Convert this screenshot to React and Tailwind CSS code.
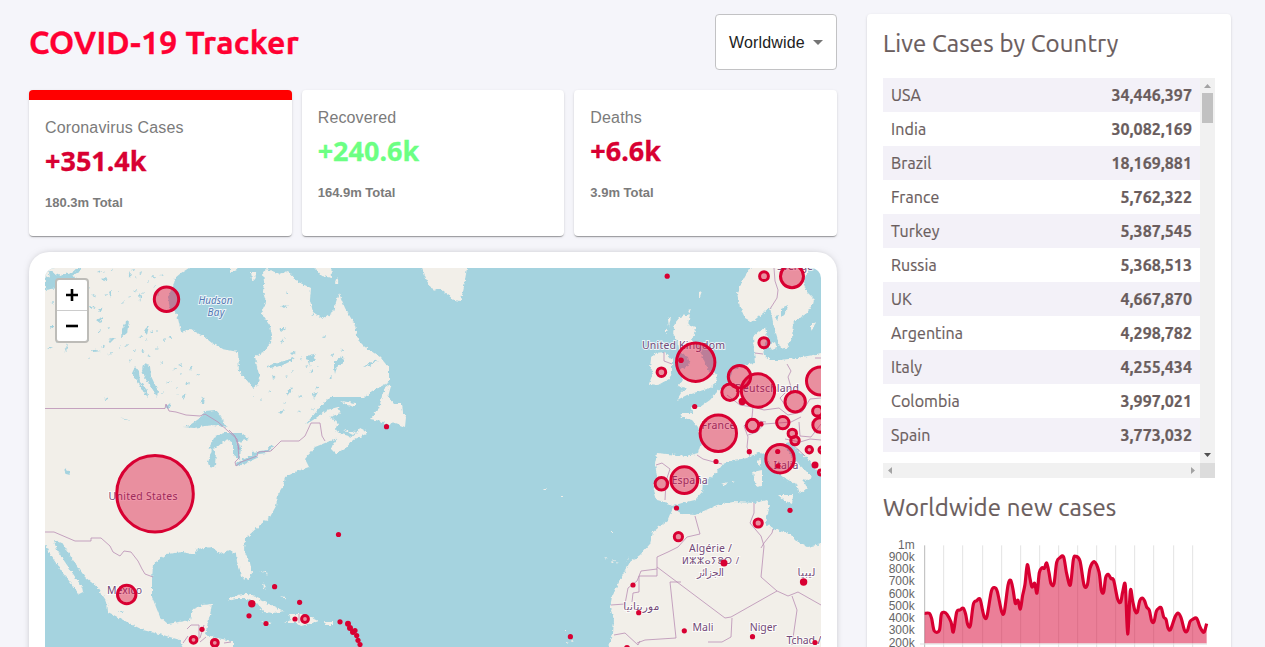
import React from "react";

const COUNTRIES = [
  ["USA", "34,446,397"],
  ["India", "30,082,169"],
  ["Brazil", "18,169,881"],
  ["France", "5,762,322"],
  ["Turkey", "5,387,545"],
  ["Russia", "5,368,513"],
  ["UK", "4,667,870"],
  ["Argentina", "4,298,782"],
  ["Italy", "4,255,434"],
  ["Colombia", "3,997,021"],
  ["Spain", "3,773,032"],
];

const LAND = [
  // North and Central America
  "M40 262H197L189 268L181 273L175 278L173 287L168 296L170 310L177 314L181 332L190 329L203 336L212 343L223 349L238 352L239 371L245 378L253 388L257 385L260 378L257 367L255 356L263 352L271 343L272 335L270 326L261 313L266 302L263 292L264 282L263 272L267 269L280 274L288 271L298 282L311 288L310 300L313 312L323 319L333 312L336 302L339 293L345 308L355 325L358 340L365 347L380 357L389 368L389 382L380 387L372 391L365 397H330L322 405L305 425L313 420L327 410L338 407L341 413L330 417L338 423L335 430L342 434L352 437L356 434L360 428L366 431L366 434L353 440L345 449L336 454L331 449L333 444L338 438L330 441L315 447L305 459L309 467L300 470L285 477L283 487L278 495L276 506L270 517L260 525L245 539L244 550L250 563L252 572L249 580L243 578L237 562L236 554L230 550L220 554L212 547L197 549L195 555L183 552L167 554L153 564L152 580L152 597L160 617L168 624L190 620L193 609L203 605L212 604L210 615L205 634L217 638L233 641V650H183L180 640L163 635L143 630L127 622L108 612L107 602L97 587L85 577L73 560L63 544L54 540L57 550L67 565L82 587L83 592L79 594L70 582L62 572L50 554L45 544H40Z",
  // Arctic islands and Greenland
  "M230 262H241L237 270L230 273Z M251 272L255 272L256 279L252 280Z M310 262H331L332 278L322 276Z M336 278L339 283L335 284Z M420 262H468L464 286L461 301L454 300L448 295L440 289L433 291L427 281Z",
  // Newfoundland and the Gulf islands
  "M386 385L391 386L388 397L394 404L402 404L403 412L406 417L405 427L400 425L392 422L389 426L381 421L370 419L379 409L382 396Z M340 401L355 403L355 407L347 405Z M343 430L356 432L353 435Z",
  // Caribbean
  "M228 601Q235 593 249 594Q262 600 271 605L284 611L273 613L264 612L256 603L247 599L236 599Z M289 614L301 614L310 617L318 621L309 624L301 626L297 623L284 623L291 620Z M262 621L272 623L268 625Z M324 622H333V625H325Z M263 582L266 587L264 590Z M230 597L233 598L230 600Z M259 571L267 572L268 576L266 573Z M280 596L285 597L287 600Z",
  // British Isles
  "M680 317L690 314L688 325L696 328L692 340L697 347L702 355L708 370L717 375L716 383L710 388L697 392L687 395L677 400L681 393L687 388L678 386L683 380L678 371L690 365L688 357L680 353L678 343L673 333L675 323Z M655 353L665 352L672 360L672 373L669 379L658 385L649 384L653 373L650 367L651 359Z M668 319L671 317L669 327Z M665 328L668 330L665 333Z M699 292L702 291L699 299Z M688 310L691 309L689 313Z",
  // Scandinavia
  "M765 262L750 268L742 282L737 293L740 307L745 318L752 322L763 313L770 307L773 323L780 347L787 348L792 338L793 323L807 313L815 300L807 292L803 282L812 262Z M811 325L816 322L811 332Z",
  // Continental Europe
  "M753 337L765 327L767 337L763 350L764 355L770 360L780 360L797 358L813 355L825 352V480L815 468L807 458L797 450L790 442L785 443L787 450L794 460L805 470L812 477L807 480L803 479L807 488L800 494L797 485L783 477L770 467L766 456L760 452L748 458L733 460L723 464L717 472L703 483L702 492L695 500L682 503L672 506L665 502L657 500L653 487L657 477L655 463L657 453L687 456L698 453L702 440L698 427L692 420L682 417L680 413L692 413L691 407L700 407L710 400L717 392L728 384L733 370L743 365L755 363L754 351Z M769 345L775 342L777 348L772 350Z M780 341L786 338L787 347L781 349Z",
  "M778 495L793 495L792 504L784 500Z M753 472L762 470L762 486L756 487Z M757 462L761 458L761 468Z M722 484L727 482L724 486Z M732 481L735 482L732 483Z",
  // Africa
  "M673 508L682 514L695 515L717 505L733 502L755 503L766 500L770 505L768 513L765 523L773 529L790 534L798 542L808 547L825 543V650H607L613 634L614 620L610 607L612 597L620 580L630 562L640 555L650 544L653 532L668 520Z",
  // Atlantic islands
  "M543 489L547 489L545 491Z M560 496H564V497H560Z M605 558L607 557L606 560Z M611 561L615 560L613 563Z M616 562L619 563L617 564Z M626 562L630 556L628 560Z M564 630H566V632Z M572 641L574 642H571Z M566 642L569 643H566Z M610 531H612V532H610Z",
];

const LAKES = [
  "M45 279L50 276L48 270L60 276L74 271L82 267L80 271L72 276L76 278L68 284L58 288L45 290Z",
  "M190 425L200 418L205 411L215 410L221 417L227 428L215 425L205 426L194 428L183 427Z",
  "M208 450L215 436L224 433L240 433L249 439L242 441L235 443L230 440L223 442L216 448Z",
  "M212 449L216 452L215 466L210 468L208 463Z M233 441L241 446L240 460L233 455Z",
  "M236 463L244 458L256 454L257 458L246 463L237 467Z M252 452L267 450L272 444L274 447L267 453L252 455Z",
  "M143 364L150 366L151 376L158 391L157 397L153 390L145 377L142 371Z",
  "M135 367L139 372L140 382L147 390L148 397L144 393L138 382L132 373Z",
  "M202 397L205 399L204 404L201 402Z M166 404L172 405L168 409L165 407Z",
  "M126 322L129 321L127 333L121 338L122 329Z M88 306L96 307L92 309Z M98 310L103 307L100 312Z",
  "M146 328L149 326L147 335L144 331Z M64 469L69 471L70 475L66 474Z M109 292L112 290L111 297Z",
  "M96 320L103 317L100 323Z M49 326L54 326L52 329Z M48 347L53 347L49 349Z M71 338L76 339L73 341Z",
  "M108 340L115 338L110 343Z M139 293L142 297L140 302Z M100 279L108 278L103 282Z M128 275L131 271L130 278Z",
  "M267 366L274 364L284 361L296 357L291 361L281 366L270 368Z M272 373L275 378L273 380Z M286 394L291 387L293 388L287 396Z",
  "M306 356L314 354L316 361L311 361L310 367Z M334 362L343 356L344 363L337 366L335 374L334 368Z M363 367L371 362L379 360L370 366Z",
  "M313 394L318 392L314 399Z M279 328L286 328L281 332Z M280 341L285 338L282 343Z M290 353L297 351L292 355Z",
  "M317 293L320 292L320 297Z M286 293L288 292L288 295Z M281 306L288 305L284 308Z M278 412L285 410L281 414Z",
  "M781 309L788 306L786 312L781 317Z M775 316L779 315L777 321Z M118 611L123 611L120 613Z M120 417L128 420L131 421L126 420Z",
  "M166 383L171 381L168 384Z M190 367L193 366L191 370Z M182 396L187 393L183 399Z M90 349L101 351L94 352Z M65 349L68 344L66 352Z",
];

const PONDS = [
  [103, 272], [110, 270], [131, 270], [134, 277], [139, 273], [97, 272], [147, 282], [153, 287], [151, 277], [117, 291],
  [104, 295], [92, 296], [88, 288], [55, 299], [50, 303], [122, 303], [128, 297], [133, 291], [142, 293], [98, 332],
  [62, 316], [82, 322], [107, 328], [85, 341], [79, 333], [102, 347], [108, 354], [119, 348], [125, 345], [132, 351],
  [88, 358], [141, 351], [147, 356], [156, 349], [163, 340], [168, 338], [56, 342], [129, 361],
  [173, 369], [180, 374], [160, 363], [178, 365], [176, 388], [186, 384], [196, 375], [161, 393],
  [176, 395], [104, 399], [156, 331], [150, 332], [139, 337], [145, 341], [160, 275], [155, 295], [71, 301],
  [311, 315], [322, 337], [300, 359], [305, 366], [309, 372], [317, 366], [329, 378], [340, 350],
  [292, 371], [285, 376], [298, 397], [312, 410], [316, 388], [268, 392], [260, 400],
  [283, 403], [297, 412], [252, 397], [331, 355],
];

const BORDERS = [
  "M45 408.500H165L166 404L169 411L176 412L186 415L200 416L205 414L218 422L228 431L237 439L239 450",
  "M229 430L235 436L239 449M271 451L258 452L257 456L241 462L236 466L235 462L239 458L238 447",
  "M271 451L281 441H299L305 436L311 423L315 423L320 423L322 436L325 441",
  "M45 532L54 532L75 541H91V538H101L110 546L113 552L120 556L124 551L131 552L138 561L142 569L145 574L153 577",
  "M187 629L191 625H199V639M204 625L200 638M183 643L188 636M200 642L206 637M224 643L231 642M299 614V623",
  "M774 268L775 281L778 290L777 298L770 309M664 352L664 361L672 364M755 353L763 354",
  "M787 364L791 371L788 377L791 387L780 398L785 405M815 358L821 358M727 395L740 405L753 407L752 417L744 426L748 437L747 447L750 456",
  "M753 407L764 410L779 408L788 415L802 412L810 399L821 398M748 435L757 432L764 424L778 423L791 422L801 417M744 426L751 420L766 422",
  "M697 455L703 459L714 462L722 464M656 465L662 463L670 469L666 481L665 500M799 422L800 436L811 437L821 424M785 439L800 442L810 439L821 440M791 443L805 456",
  "M695 516L698 527L700 534L687 537L678 547L668 552L657 557V576H639V592L633 593L632 602M657 569L641 571L637 581L628 588L625 604L611 605M657 567L725 618L731 617L777 591L761 577L764 546L761 536L750 523L754 513L754 503",
  "M761 548L764 543L772 533L773 529M777 591L788 596L798 592L821 605M792 596L797 610L792 645M732 618L731 637L722 642H708M681 582H670L676 638L645 640L637 643M614 635L625 633L638 645L640 641",
];

// x, y, radius of each case marker
const CASES = [
  [166.500, 299.300, 12.200], [155, 493.700, 38.300], [126.700, 594.500, 9.200], [695.700, 362.200, 19.200], [758, 390.500, 16.700],
  [739.500, 376.700, 11.200], [730, 392.200, 8.200], [792, 276.200, 11.500], [764, 276.200, 4.400], [763.900, 342.700, 5], [661.400, 372.200, 4.300],
  [820.500, 381, 14], [795.200, 401.700, 10.200], [718.300, 433.200, 18.200], [684.300, 480.200, 13.400], [661.400, 483.800, 6.300],
  [780, 458.700, 14.200], [752.500, 425.500, 6.200], [782.800, 422.600, 6.200], [792.300, 433.400, 4.200], [795, 440.600, 4.200],
  [809.300, 449.700, 3.200], [817.500, 411.200, 4.900], [820, 425, 7.200], [822, 450, 3], [821, 472.500, 2.500], [678.400, 536.700, 4.100],
  [758.200, 523, 4.100], [193.500, 639.800, 3.400], [214.800, 642.800, 3.400], [305, 619, 3.400],
];

const DOTS = [
  [386.500, 426.700, 2.600], [338.500, 534.500, 2.600], [274.600, 586.700, 2.600], [299.600, 602.300, 2.600],
  [251.800, 603.700, 3.700], [249, 615.800, 2.600], [266, 623.500, 2.600], [295, 619, 2.600], [340, 621.800, 2.600],
  [348, 623.800, 3], [350, 628, 3], [353, 632, 3], [355, 630.500, 2.600], [356.700, 635.500, 2.600], [358, 640.300, 2.600],
  [360, 644.500, 2.600], [202, 629.300, 2.600], [667.200, 276.200, 2.600], [681, 360.300, 2.800], [694.700, 406.500, 2.600],
  [742.300, 401.500, 3.700], [761, 424, 2.600], [749.300, 451.700, 2.600], [716, 461.500, 2.600], [777.700, 451.500, 2.600],
  [778, 466, 2.600], [815, 465, 3.500], [676.500, 508, 2.600], [790, 510.300, 2.600], [724, 563, 3.500], [803.600, 582, 3.700],
  [633, 585, 2.600], [638.700, 612.700, 2.600], [684.300, 630.800, 2.600], [752.500, 636.700, 2.600], [570.400, 636.700, 2.600],
  [815, 642.500, 2.600], [627, 648, 3],
];

const LABELS = [
  ["United States", 143, 500, 69], ["México", 124.500, 593.500, 35], ["United Kingdom", 683.500, 349, 83],
  ["Deutschland", 767, 391.500, 64], ["France", 718.500, 429, 34], ["España", 689.700, 484, 36], ["Italia", 786, 469, 25],
  ["Algérie /", 710.500, 552, 43], ["الجزائر", 710.500, 575.500, 27], ["ليبيا", 806.500, 575.500, 18],
  ["موريتانيا", 641.300, 610, 36], ["Mali", 703, 630.500, 21], ["Niger", 763.300, 630.500, 27],
  ["Tchad /", 804, 643.500, 35], ["Sverige", 795, 270, 36],
];

function WorldMap() {
  return (
    <svg viewBox="45 268 776 379" className="block h-[379px] w-[776px] shrink-0 rounded-t-[10px] bg-[#a5d3df]">
      <defs>
        <filter id="coast" filterUnits="userSpaceOnUse" x="30" y="255" width="810" height="400" colorInterpolationFilters="sRGB">
          <feTurbulence type="fractalNoise" baseFrequency="0.35" numOctaves="2" seed="4" result="noise" />
          <feDisplacementMap in="SourceGraphic" in2="noise" scale="4" xChannelSelector="R" yChannelSelector="G" />
        </filter>
      </defs>
      <g filter="url(#coast)">
        {LAND.map((d) => (
          <path key={d} d={d} fill="#f2efe9" />
        ))}
        {LAKES.map((d) => (
          <path key={d} d={d} fill="#a5d3df" />
        ))}
        {PONDS.map(([x, y], i) => (
          <path key={`${x}-${y}`} d={`M${x} ${y}l${2 + (i % 3)} ${-1 - (i % 2)}l-1 ${2 + (i % 2)}z`} fill="#a5d3df" />
        ))}
      </g>
      {BORDERS.map((d) => (
        <path key={d} d={d} fill="none" stroke="#b98fb4" strokeWidth="1" opacity="0.8" />
      ))}
      <g
        fontFamily='"Noto Sans", "DejaVu Sans", sans-serif'
        fontSize="10.500"
        textAnchor="middle"
        fill="#734a78"
        stroke="#ffffff"
        strokeOpacity="0.75"
        strokeWidth="2"
        paintOrder="stroke"
      >
        {LABELS.map(([text, x, y, width]) => (
          <text key={text} x={x} y={y} textLength={width} lengthAdjust="spacing">
            {text}
          </text>
        ))}
        <text x="710.500" y="563.500" fontSize="9" textLength="57">
          ⵍⵣⵣⴰⵢⴻⵔ /
        </text>
        <g fill="#5478b4" fontStyle="italic" fontSize="10">
          <text x="215.500" y="304" textLength="34">Hudson</text>
          <text x="216" y="316" textLength="17">Bay</text>
        </g>
      </g>
      <g fill="#dd0030" fillOpacity="0.400" stroke="#d80032" strokeWidth="3">
        {CASES.map(([x, y, r]) => (
          <circle key={`${x}-${y}`} cx={x} cy={y} r={r} />
        ))}
      </g>
      <g fill="#d80032">
        {DOTS.map(([x, y, r]) => (
          <circle key={`${x}-${y}`} cx={x} cy={y} r={r} />
        ))}
      </g>
    </svg>
  );
}

// Daily new cases as plotted points, three units to a pixel
const SERIES = [
  [194, 609], [208, 609], [215, 625], [223, 662], [238, 660], [244, 612], [253, 606], [261, 612], [273, 635], [280, 665],
  [290, 606], [300, 599], [310, 594], [317, 612], [323, 642], [331, 646], [340, 582], [350, 571], [360, 566], [367, 597],
  [373, 620], [381, 618], [394, 543], [404, 532], [412, 544], [425, 604], [433, 604], [444, 525], [452, 510], [459, 537],
  [466, 579], [474, 570], [481, 596], [488, 555], [495, 522], [502, 463], [510, 505], [516, 530], [524, 519], [531, 548],
  [538, 487], [546, 472], [553, 474], [560, 458], [567, 487], [573, 520], [582, 520], [590, 456], [600, 442], [611, 440],
  [620, 490], [631, 524], [640, 448], [647, 438], [660, 452], [672, 524], [682, 524], [690, 474], [703, 454], [717, 485],
  [724, 540], [731, 545], [737, 502], [745, 492], [753, 505], [761, 510], [773, 567], [782, 575], [788, 545], [796, 525],
  [803, 671], [811, 541], [818, 572], [825, 602], [832, 605], [839, 572], [847, 563], [854, 572], [860, 590], [868, 600],
  [875, 632], [882, 634], [889, 603], [896, 594], [904, 593], [911, 620], [918, 627], [924, 653], [932, 657], [945, 620],
  [954, 608], [963, 622], [974, 661], [982, 661], [990, 634], [998, 627], [1010, 624], [1020, 650], [1029, 665], [1034, 662],
  [1040, 640],
];

function smoothLine(points) {
  let d = `M${points[0][0]} ${points[0][1]}`;
  for (let i = 0; i < points.length - 1; i++) {
    const before = points[i - 1] || points[i];
    const from = points[i];
    const to = points[i + 1];
    const after = points[i + 2] || to;
    const k = 0.16;
    d += `C${from[0] + (to[0] - before[0]) * k} ${from[1] + (to[1] - before[1]) * k} ${to[0] - (after[0] - from[0]) * k} ${
      to[1] - (after[1] - from[1]) * k
    } ${to[0]} ${to[1]}`;
  }
  return d;
}

const TICKS = [
  ["1m", 404], ["900k", 440], ["800k", 476], ["700k", 512], ["600k", 551],
  ["500k", 587], ["400k", 623], ["300k", 659], ["200k", 697],
];

function CasesChart() {
  const line = smoothLine(SERIES);
  return (
    <svg viewBox="69 380 996 331" className="block h-[110.333px] w-[332px] shrink-0">
      {[251, 308, 368, 425, 482, 539, 596, 653, 710, 767, 824, 881, 941, 998].map((x) => (
        <path key={x} d={`M${x} 405V711`} stroke="#e3e3e3" strokeWidth="3" />
      ))}
      <path d="M194 405V711" stroke="#b9b9b9" strokeWidth="3" />
      <path d="M180 701H1041" stroke="#dddddd" strokeWidth="3" />
      <path d={`${line}V699H194Z`} fill="#d80032" fillOpacity="0.500" />
      <path d={line} fill="none" stroke="#d80032" strokeWidth="9.500" strokeLinejoin="round" />
      <g fontFamily='"Liberation Sans", Arial, sans-serif' fontSize="36" fill="#666666" textAnchor="end">
        {TICKS.map(([text, y]) => (
          <text key={text} x="164" y={y + 12}>
            {text}
          </text>
        ))}
      </g>
    </svg>
  );
}

function InfoBox({ title, cases, total, active, green }) {
  return (
    <div
      className={
        "h-[146px] flex-1 rounded bg-white px-4 pt-4 shadow-[0_2px_1px_-1px_rgba(0,0,0,0.2),0_1px_1px_rgba(0,0,0,0.14),0_1px_3px_rgba(0,0,0,0.12)] " +
        (active ? "border-t-[10px] border-[#ff0000]" : "")
      }
    >
      <p className="pt-px text-[16px] leading-[22px] tracking-[0.15px] text-[#7b7b7b]">{title}</p>
      <h2
        className={
          "mt-[5px] font-['Noto_Sans',sans-serif] text-[27px] leading-[34px] font-bold [-webkit-text-stroke:0.3px] " +
          (green ? "text-[#6cff83]" : "text-[#d80032]")
        }
      >
        {cases}
      </h2>
      <p className="mt-[15px] text-[13px] leading-[20px] font-bold text-[#7b7b7b]">{total}</p>
    </div>
  );
}

export default function App() {
  return (
    <div className="flex h-[647px] w-[1265px] items-start gap-[30px] overflow-hidden bg-[#f5f5fa] pt-[14px] pl-[29px] font-['Liberation_Sans',Arial,sans-serif]">
      <main className="w-[808px] shrink-0">
        <header className="flex h-[56px] items-center justify-between">
          <h1 className="font-['Ubuntu','Noto_Sans',sans-serif] text-[32px] leading-none font-bold tracking-[0.25px] whitespace-nowrap text-[#ff0032] [-webkit-text-stroke:0.3px]">
            COVID-19 Tracker
          </h1>
          <div className="flex h-[56px] w-[122px] items-center rounded border border-[#c2c2c4] bg-white pl-[13px] text-[16px] text-[#212121]">
            <span className="w-[77px] pt-px tracking-[0.15px]">Worldwide</span>
            <svg viewBox="0 0 10 5" className="ml-[7px] h-[5px] w-[10px]">
              <path d="M0 0H10L5 5Z" fill="#757575" />
            </svg>
          </div>
        </header>
        <section className="mt-[20px] flex gap-[10px]">
          <InfoBox title="Coronavirus Cases" cases="+351.4k" total="180.3m Total" active />
          <InfoBox title="Recovered" cases="+240.6k" total="164.9m Total" green />
          <InfoBox title="Deaths" cases="+6.6k" total="3.9m Total" />
        </section>
        <section className="relative mt-[16px] h-[500px] rounded-[20px] bg-white p-4 shadow-[0_0_8px_-4px_rgba(0,0,0,0.5)]">
          <WorldMap />
          <div className="absolute top-[26px] left-[26px] w-[34px] rounded border-2 border-[#bdbcb8] bg-white">
            <div className="flex h-[31px] items-center justify-center border-b border-[#cccccc]">
              <svg viewBox="0 0 12 12" className="h-3 w-3">
                <path d="M6 0V12M0 6H12" stroke="#000" strokeWidth="2.600" />
              </svg>
            </div>
            <div className="flex h-[30px] items-center justify-center">
              <svg viewBox="0 0 12 12" className="h-3 w-3">
                <path d="M0 6H12" stroke="#000" strokeWidth="2.600" />
              </svg>
            </div>
          </div>
        </section>
      </main>

      <aside className="h-[700px] w-[364px] shrink-0 rounded bg-white px-4 pt-4 font-['Ubuntu','Noto_Sans',sans-serif] text-[#6a5d5d] shadow-[0_2px_1px_-1px_rgba(0,0,0,0.2),0_1px_1px_rgba(0,0,0,0.14),0_1px_3px_rgba(0,0,0,0.12)]">
        <h3 className="h-[28px] text-[24px] leading-[28px] tracking-[0.12px] whitespace-nowrap [-webkit-text-stroke:0.2px]">
          Live Cases by Country
        </h3>
        <div className="mt-[20px] h-[400px]">
          <div className="flex h-[385px]">
            <div className="w-[317px] overflow-hidden">
              {COUNTRIES.map(([name, count], i) => (
                <div
                  key={name}
                  className={
                    "flex h-[34px] items-center justify-between px-2 text-[16px] " + (i % 2 === 0 ? "bg-[#f3f1f8]" : "bg-white")
                  }
                >
                  <span className="tracking-[0.1px] [-webkit-text-stroke:0.2px]">{name}</span>
                  <strong className="font-bold tracking-[0.05px] [-webkit-text-stroke:0.2px]">{count}</strong>
                </div>
              ))}
            </div>
            <div className="flex w-[15px] flex-col items-center bg-[#f1f1f1]">
              <svg viewBox="0 0 15 15" className="h-[15px] w-[15px]">
                <path d="M4 10H11L7.500 6Z" fill="#a3a3a3" />
              </svg>
              <div className="h-[30px] w-[11px] bg-[#c1c1c1]" />
              <svg viewBox="0 0 15 15" className="mt-auto h-[15px] w-[15px]">
                <path d="M4 5H11L7.500 9Z" fill="#505050" />
              </svg>
            </div>
          </div>
          <div className="flex h-[15px] bg-[#f1f1f1]">
            <svg viewBox="0 0 317 15" className="h-[15px] w-[317px]">
              <path d="M9 4V11L5 7.500ZM308 4V11L312 7.500Z" fill="#a3a3a3" />
            </svg>
            <div className="w-[15px] bg-[#dcdcdc]" />
          </div>
        </div>
        <h3 className="mt-[16px] h-[28px] text-[24px] leading-[28px] tracking-[0.12px] whitespace-nowrap [-webkit-text-stroke:0.2px]">
          Worldwide new cases
        </h3>
        <div className="mt-[15px]">
          <CasesChart />
        </div>
      </aside>
    </div>
  );
}
